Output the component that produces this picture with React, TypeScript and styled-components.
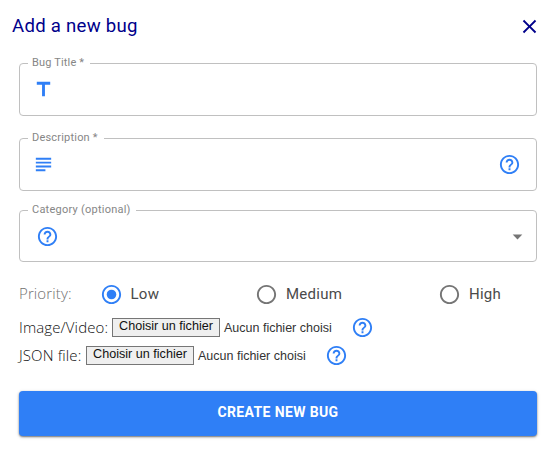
import React from "react";
import styled, { createGlobalStyle } from "styled-components";

const BLUE = "#2f7ff6";

const GlobalStyle = createGlobalStyle`
  *, *::before, *::after { box-sizing: border-box; }
  body { margin: 0; background: #fff; font-family: Roboto, "Liberation Sans", sans-serif; }
`;

const Dialog = styled.form`
  display: flex;
  flex-direction: column;
  width: 557px;
  height: 457px;
  padding: 0 20px 0 19px;
  overflow: hidden;
  background: #fff;
`;

const Header = styled.header`
  display: flex;
  justify-content: space-between;
  align-items: center;
  height: 52px;
  margin: 0 -4px 5px -7px;
`;

const Title = styled.h1`
  margin: 0;
  font-size: 18.6px;
  font-weight: 400;
  line-height: 24px;
  letter-spacing: 0.26px;
  color: #00008b;
`;

const IconButton = styled.button`
  display: flex;
  padding: 0;
  border: 0;
  background: none;
  color: #00008b;
`;

const Icon = styled.svg<{ $size?: number }>`
  display: block;
  flex: none;
  width: ${(p) => p.$size ?? 23}px;
  height: ${(p) => p.$size ?? 23}px;
  fill: currentColor;
`;

const Field = styled.fieldset<{ $height: number; $gap?: number }>`
  height: ${(p) => p.$height}px;
  min-width: 0;
  margin: 0 0 ${(p) => p.$gap ?? 0}px;
  padding: 0 15px 0 8px;
  border: 1px solid #c0c0c0;
  border-radius: 4px;
`;

const Legend = styled.legend<{ $width: number; $tracking?: number }>`
  width: ${(p) => p.$width}px;
  height: 13px;
  padding: 0 4px;
  font-size: 11px;
  line-height: 11px;
  letter-spacing: ${(p) => p.$tracking ?? 0.2}px;
  white-space: nowrap;
  color: #868686;
`;

const FieldBody = styled.div<{ $indent?: number; $end?: number }>`
  display: flex;
  align-items: center;
  justify-content: space-between;
  height: 38px;
  padding-left: ${(p) => p.$indent ?? 4}px;
  margin-right: ${(p) => p.$end ?? 0}px;
  color: ${BLUE};
`;

const Arrow = styled(Icon)`
  color: #757575;
`;

const Priority = styled.div`
  display: grid;
  grid-template-columns: 80.5px 155.5px 183px 1fr;
  align-items: center;
  height: 24px;
  margin-top: 20px;
`;

const Caption = styled.span<{ $muted?: boolean; $width?: number }>`
  width: ${(p) => (p.$width ? p.$width + "px" : "auto")};
  font-family: "Open Sans", "Noto Sans", sans-serif;
  font-size: 15px;
  font-weight: 300;
  letter-spacing: 0.12px;
  line-height: 20px;
  padding-bottom: ${(p) => (p.$muted ? 3 : 1)}px;
  white-space: nowrap;
  color: ${(p) => (p.$muted ? "#707070" : "#111")};
`;

const Option = styled.label<{ $checked?: boolean }>`
  display: flex;
  align-items: center;
  gap: 8px;
  font-size: 15px;
  letter-spacing: 0.25px;
  color: #4a4a4a;
  svg { color: ${(p) => (p.$checked ? BLUE : "#757575")}; }
`;

const Files = styled.div`
  display: flex;
  flex-direction: column;
  margin-top: 7px;
`;

const FileRow = styled.div`
  display: flex;
  align-items: center;
  height: 28px;
  color: ${BLUE};
`;

const FileButton = styled.button`
  width: 108px;
  height: 19px;
  padding: 0 0 1px;
  border: 1px solid #767676;
  border-radius: 0;
  background: #efefef;
  font: 12.6px/15px "Liberation Sans", Arial, sans-serif;
  color: #111;
  white-space: nowrap;
`;

const FileStatus = styled.span`
  width: 131px;
  padding: 1px 0 0 4px;
  font: 12.5px/16px "Liberation Sans", Arial, sans-serif;
  color: #333;
  white-space: nowrap;
`;

const Submit = styled.button`
  height: 45px;
  margin-top: 22px;
  padding: 0 0 3px;
  border: 0;
  border-radius: 4px;
  background: ${BLUE};
  box-shadow: 0 1px 2px rgba(0, 0, 0, 0.5), 0 1px 4px rgba(0, 0, 0, 0.12);
  font: 700 14px/20px Roboto, sans-serif;
  letter-spacing: 0.38px;
  color: #fff;
`;

const Help = ({ size }: { size?: number }) => (
  <Icon $size={size} viewBox="0 0 24 24">
    <path d="M11 18h2v-2h-2v2zm1-16C6.48 2 2 6.48 2 12s4.48 10 10 10 10-4.48 10-10S17.52 2 12 2zm0 18c-4.41 0-8-3.59-8-8s3.59-8 8-8 8 3.59 8 8-3.59 8-8 8zm0-14c-2.21 0-4 1.79-4 4h2c0-1.1.9-2 2-2s2 .9 2 2c0 2-3 1.75-3 5h2c0-2.25 3-2.5 3-5 0-2.21-1.79-4-4-4z" />
  </Icon>
);

const Radio = ({ label, checked }: { label: string; checked?: boolean }) => (
  <Option $checked={checked}>
    <Icon viewBox="0 0 24 24">
      <path d="M12 2C6.48 2 2 6.48 2 12s4.48 10 10 10 10-4.48 10-10S17.52 2 12 2zm0 18c-4.42 0-8-3.58-8-8s3.58-8 8-8 8 3.58 8 8-3.58 8-8 8z" />
      {checked && <circle cx="12" cy="12" r="5" />}
    </Icon>
    {label}
  </Option>
);

const FilePicker = ({ label, width }: { label: string; width: number }) => (
  <FileRow>
    <Caption $width={width}>{label}</Caption>
    <FileButton type="button">Choisir un fichier</FileButton>
    <FileStatus>Aucun fichier choisi</FileStatus>
    <Help />
  </FileRow>
);

export default function App() {
  return (
    <>
      <GlobalStyle />
      <Dialog>
        <Header>
          <Title>Add a new bug</Title>
          <IconButton type="button" aria-label="Close">
            <Icon viewBox="0 0 24 24">
              <path d="M19 6.41L17.59 5 12 10.59 6.41 5 5 6.41 10.59 12 5 17.59 6.41 19 12 13.41 17.59 19 19 17.59 13.41 12z" />
            </Icon>
          </IconButton>
        </Header>

        <Field $height={59} $gap={16}>
          <Legend $width={62} $tracking={0.16}>Bug Title *</Legend>
          <FieldBody>
            <Icon $size={23} viewBox="0 0 24 24">
              <path d="M5 4v3h5.5v12h3V7H19V4z" />
            </Icon>
          </FieldBody>
        </Field>

        <Field $height={59} $gap={13}>
          <Legend $width={76}>Description *</Legend>
          <FieldBody>
            <Icon $size={23} viewBox="0 0 24 24">
              <path d="M14 17H4v2h10v-2zm6-8H4v2h16V9zM4 15h16v-2H4v2zM4 5v2h16V5H4z" />
            </Icon>
            <Help />
          </FieldBody>
        </Field>

        <Field $height={58}>
          <Legend $width={108} $tracking={0.24}>Category (optional)</Legend>
          <FieldBody $indent={8} $end={-7.5}>
            <Help />
            <Arrow viewBox="0 0 24 24">
              <path d="M7 10l5 5 5-5z" />
            </Arrow>
          </FieldBody>
        </Field>

        <Priority>
          <Caption $muted>Priority:</Caption>
          <Radio label="Low" checked />
          <Radio label="Medium" />
          <Radio label="High" />
        </Priority>

        <Files>
          <FilePicker label="Image/Video:" width={93} />
          <FilePicker label="JSON file:" width={67} />
        </Files>

        <Submit type="button">CREATE NEW BUG</Submit>
      </Dialog>
    </>
  );
}
